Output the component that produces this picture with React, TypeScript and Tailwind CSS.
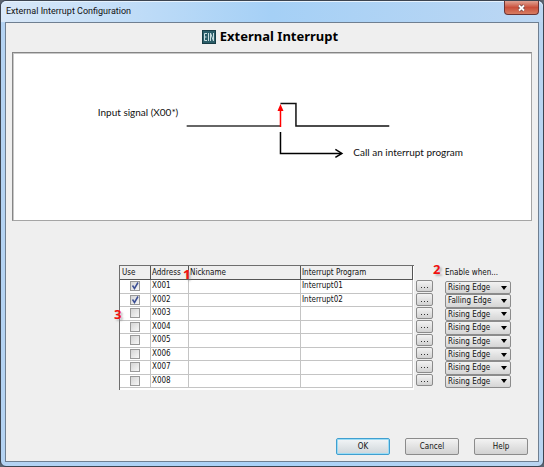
import { useState } from 'react';

type Edge = 'Rising Edge' | 'Falling Edge';

type Row = {
  address: string;
  use: boolean;
  nickname: string;
  program: string;
  edge: Edge;
};

const initialRows: Row[] = [
  { address: 'X001', use: true, nickname: '', program: 'Interrupt01', edge: 'Rising Edge' },
  { address: 'X002', use: true, nickname: '', program: 'Interrupt02', edge: 'Falling Edge' },
  { address: 'X003', use: false, nickname: '', program: '', edge: 'Rising Edge' },
  { address: 'X004', use: false, nickname: '', program: '', edge: 'Rising Edge' },
  { address: 'X005', use: false, nickname: '', program: '', edge: 'Rising Edge' },
  { address: 'X006', use: false, nickname: '', program: '', edge: 'Rising Edge' },
  { address: 'X007', use: false, nickname: '', program: '', edge: 'Rising Edge' },
  { address: 'X008', use: false, nickname: '', program: '', edge: 'Rising Edge' },
];

export default function App() {
  const [rows, setRows] = useState(initialRows);
  const update = (address: string, patch: Partial<Row>) =>
    setRows(rows.map((row) => (row.address === address ? { ...row, ...patch } : row)));

  return (
    <div className="bg-[#5b6470] font-['DejaVu_Sans_Condensed','DejaVu_Sans',sans-serif] text-[8px] text-[#111]">
      <div className="flex min-h-screen flex-col rounded-md border border-[#3c4450] bg-linear-to-r from-[#b4d3f3] via-[#a9d2f8] to-[#b9d5f1] px-1 pb-1">
        <TitleBar />
        <main className="flex flex-1 flex-col border border-[#6f7f91] bg-[#efefef] px-1.5">
          <h1 className="flex h-[28px] items-center justify-center gap-1 pr-1 font-['Noto_Sans',sans-serif] text-[13px] font-bold text-black">
            <EinIcon />
            External Interrupt
          </h1>
          <div className="mt-px flex justify-center border border-[#858585] border-r-[#a5a5a5] border-b-[#a5a5a5] bg-white p-px shadow-[inset_1px_1px_0_#c8c8c8]">
            <TimingDiagram />
          </div>
          <div className="mt-11 mr-[21px] ml-[107px] flex items-start">
            <InterruptTable rows={rows} update={update} />
            <div className="mt-[15px] ml-0.5 grid h-[107px] w-[17px] grid-rows-8">
              {rows.map((row) => (
                <button key={row.address} aria-label={`Browse program for ${row.address}`} className="mb-px flex items-center justify-center rounded-xs border border-[#8b8b8b] bg-linear-to-b from-[#f3f3f3] to-[#d2d2d2]">
                  <svg width="8" height="2" className="mt-1" fill="#333"><path d="M0 0h1v1H0zM3 0h1v1H3zM6 0h1v1H6z" /></svg>
                </button>
              ))}
            </div>
            <div className="relative ml-3 w-[66px]">
              <Marker text="2" className="-top-1 -left-3" />
              <div className="flex h-4 items-center whitespace-nowrap">Enable when...</div>
              <div className="grid h-[107px] grid-rows-8">
                {rows.map((row) => (
                  <div key={row.address} className="relative flex">
                    <select
                      aria-label={`Enable ${row.address} when`}
                      value={row.edge}
                      onChange={(e) => update(row.address, { edge: e.target.value as Edge })}
                      className="w-full appearance-none rounded-xs border border-[#8b8b8b] bg-linear-to-b from-[#f2f2f2] to-[#d5d5d5] pl-0.5 leading-3"
                    >
                      <option>Rising Edge</option>
                      <option>Falling Edge</option>
                    </select>
                    <svg width="6" height="4" className="pointer-events-none absolute top-1/2 right-1 -translate-y-1/2"><path d="M0 0h6L3 4z" /></svg>
                  </div>
                ))}
              </div>
            </div>
          </div>
          <footer className="mt-auto mr-1 mb-1.5 flex justify-end gap-[15px]">
            <button className="h-[17px] w-[54px] rounded-xs border border-[#3f9fd0] bg-linear-to-b from-[#f2f5f7] to-[#cfd6da] shadow-[inset_0_0_0_1px_#9bdcf5]">OK</button>
            <button className="h-[17px] w-[54px] rounded-xs border border-[#8b8b8b] bg-linear-to-b from-[#f3f3f3] to-[#d2d2d2]">Cancel</button>
            <button className="h-[17px] w-[54px] rounded-xs border border-[#8b8b8b] bg-linear-to-b from-[#f3f3f3] to-[#d2d2d2]">Help</button>
          </footer>
        </main>
      </div>
    </div>
  );
}

function TitleBar() {
  return (
    <header className="-mx-1 flex h-[21px] items-start justify-between rounded-t-md bg-linear-to-r from-[#d9e8f8] via-[#a5d0f6] to-[#bcd7f3] pr-1 pl-[5px] shadow-[inset_0_1px_0_#e6f2fd]">
      <span className="font-['Roboto',sans-serif] text-[9px] leading-5">External Interrupt Configuration</span>
      <button aria-label="Close" className="flex h-[14px] w-[35px] items-center justify-center rounded-b-sm border border-t-0 border-[#6b3434] bg-linear-to-b from-[#dfa294] via-[#c94f3b] to-[#d77c62]">
        <svg width="9" height="8" viewBox="0 0 9 8">
          <path d="M2 1.5l5 5M7 1.5l-5 5" stroke="#6b4545" strokeWidth="3.2" />
          <path d="M2 1.5l5 5M7 1.5l-5 5" stroke="#fff" strokeWidth="1.9" />
        </svg>
      </button>
    </header>
  );
}

function EinIcon() {
  return (
    <svg width="14" height="14" viewBox="0 0 14 14" fill="none">
      <rect x="0.5" y="0.5" width="13" height="13" fill="#2b5d68" stroke="#173c45" />
      <path d="M5 3.5H2.5v7H5M2.5 7h2M6.5 3v8M8.5 11V3l3 8V3" stroke="#c9dde0" />
    </svg>
  );
}

function TimingDiagram() {
  return (
    <svg width="517" height="165" viewBox="0 0 517 165" fill="none" className="font-['Lato',sans-serif] text-[10px]">
      <text x="84" y="62" fill="#111">Input signal (X00*)</text>
      <path d="M173 72h94" stroke="#333" strokeWidth="1.6" />
      <path d="M267 49.5h15.5v22.5h93.5" stroke="#111" strokeWidth="1.5" />
      <path d="M267 73V54" stroke="#f00" strokeWidth="1.5" />
      <path d="M267 50l3 7h-6z" fill="#f00" />
      <path d="M267 78v21.5h61" stroke="#000" strokeWidth="1.5" />
      <path d="M322 95.5l6.5 4-6.5 4" stroke="#000" strokeWidth="1.5" />
      <text x="340" y="102" fill="#111">Call an interrupt program</text>
    </svg>
  );
}

function InterruptTable({ rows, update }: { rows: Row[]; update: (address: string, patch: Partial<Row>) => void }) {
  return (
    <div className="relative flex-1 border-t border-l border-[#6e6e6e] bg-white pr-px pb-0.5">
      <table className="h-[122px] w-full table-fixed border-separate border-spacing-0 text-left">
        <thead className="bg-[#efefef]">
          <tr className="h-[14px] leading-3">
            <th className="w-[31px] border-r border-b border-[#555] p-0 pl-0.5 font-normal">Use</th>
            <th className="w-[38px] border-r border-b border-[#555] p-0 pl-px font-normal">Address</th>
            <th className="border-b border-[#555] p-0 pl-px font-normal">Nickname</th>
            <th className="w-[113px] border-r border-b border-l border-[#555] p-0 pl-px font-normal">Interrupt Program</th>
          </tr>
        </thead>
        <tbody>
          {rows.map((row) => (
            <tr key={row.address} className="leading-3">
              <td className="border-r border-b border-[#c4c4c4] p-0">
                <label className="relative mx-auto block size-[10px]">
                  <input
                    type="checkbox"
                    aria-label={`Use ${row.address}`}
                    checked={row.use}
                    onChange={(e) => update(row.address, { use: e.target.checked })}
                    className="block size-[10px] appearance-none border border-[#999] bg-linear-to-br from-[#d5d5d5] to-[#f7f7f7]"
                  />
                  {row.use && (
                    <svg width="10" height="10" viewBox="0 0 10 10" fill="none" className="pointer-events-none absolute inset-0">
                      <path d="M2.5 4.5l2 3 3.5-6" stroke="#3c4f94" strokeWidth="1.5" />
                    </svg>
                  )}
                </label>
              </td>
              <td className="border-r border-b border-[#c4c4c4] p-0 pl-px">{row.address}</td>
              <td className="border-b border-[#c4c4c4] p-0 pl-px">{row.nickname}</td>
              <td className="border-r border-b border-l border-[#c4c4c4] p-0 pl-px">{row.program}</td>
            </tr>
          ))}
        </tbody>
      </table>
      <Marker text="1" className="top-0 left-[63px]" />
      <Marker text="3" className="top-10 -left-1.5" />
    </div>
  );
}

function Marker({ text, className }: { text: string; className: string }) {
  return <span className={`absolute font-['Noto_Sans',sans-serif] text-[13px] leading-4 font-bold text-[#f01010] [text-shadow:2px_2px_2px_#8888] ${className}`}>{text}</span>;
}
